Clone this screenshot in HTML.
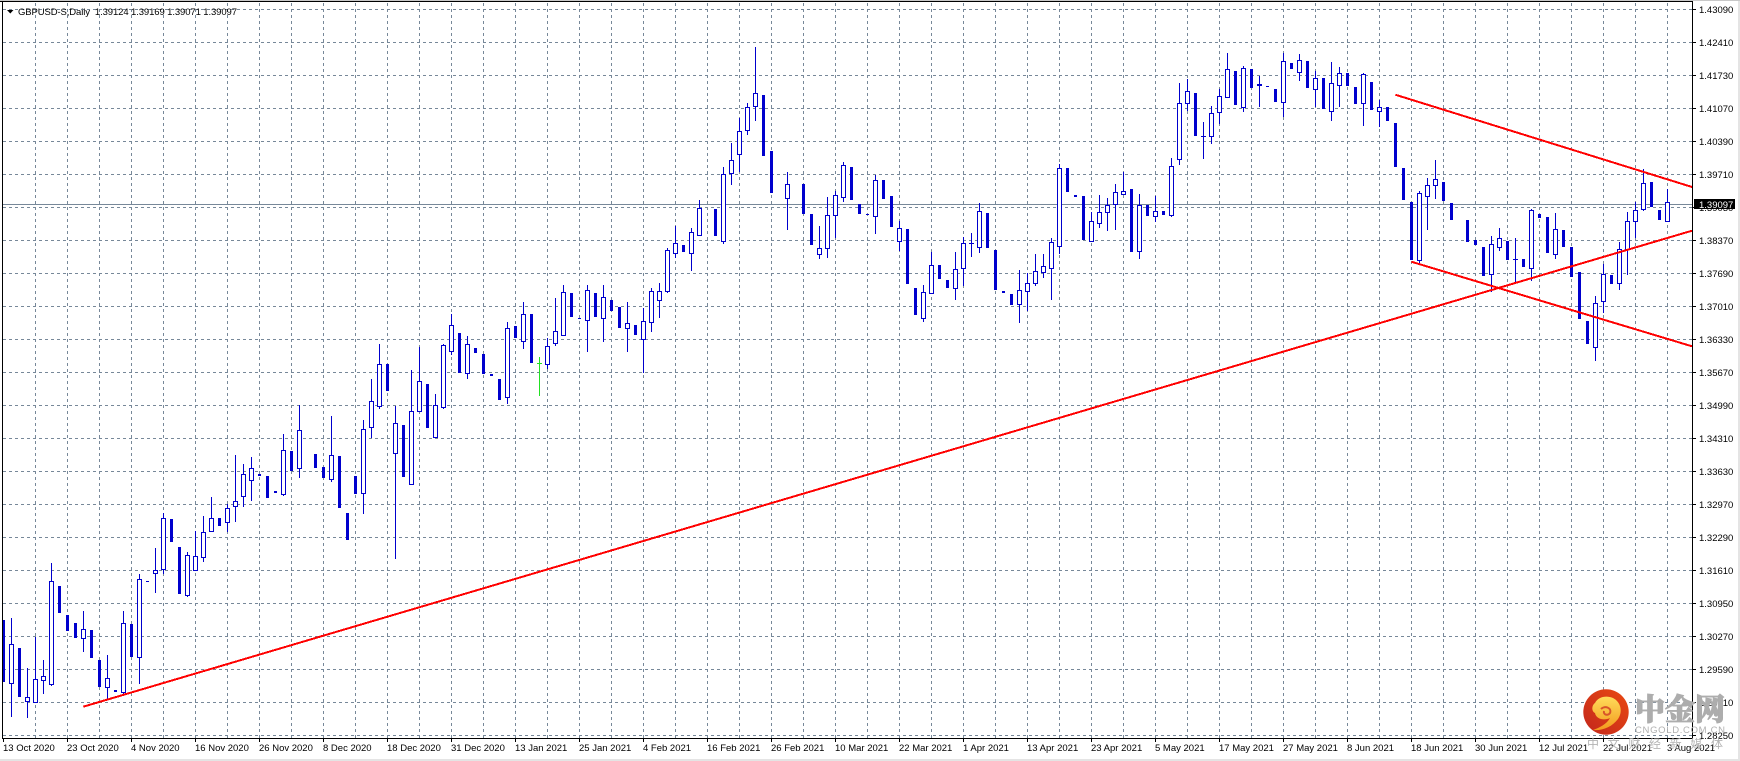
<!DOCTYPE html>
<html><head><meta charset="utf-8"><title>GBPUSD-S,Daily</title>
<style>
html,body{margin:0;padding:0;background:#fff;width:1740px;height:761px;overflow:hidden}
svg{display:block}
text{font-family:"Liberation Sans",sans-serif;font-size:9.5px;fill:#000}
</style></head><body>
<svg width="1740" height="761" viewBox="0 0 1740 761" xmlns="http://www.w3.org/2000/svg">
<rect width="1740" height="761" fill="#fff"/>
<g shape-rendering="crispEdges">
<path fill="none" stroke="#778899" stroke-width="1" stroke-dasharray="3 3" d="M3 9.5H1692M3 42.5H1692M3 75.5H1692M3 108.5H1692M3 141.5H1692M3 174.5H1692M3 207.5H1692M3 240.5H1692M3 273.5H1692M3 306.5H1692M3 339.5H1692M3 372.5H1692M3 405.5H1692M3 438.5H1692M3 471.5H1692M3 504.5H1692M3 537.5H1692M3 570.5H1692M3 603.5H1692M3 636.5H1692M3 669.5H1692M3 702.5H1692M3 735.5H1692
M35.5 3V738M67.5 3V738M99.5 3V738M131.5 3V738M163.5 3V738M195.5 3V738M227.5 3V738M259.5 3V738M291.5 3V738M323.5 3V738M355.5 3V738M387.5 3V738M419.5 3V738M451.5 3V738M483.5 3V738M515.5 3V738M547.5 3V738M579.5 3V738M611.5 3V738M643.5 3V738M675.5 3V738M707.5 3V738M739.5 3V738M771.5 3V738M803.5 3V738M835.5 3V738M867.5 3V738M899.5 3V738M931.5 3V738M963.5 3V738M995.5 3V738M1027.5 3V738M1059.5 3V738M1091.5 3V738M1123.5 3V738M1155.5 3V738M1187.5 3V738M1219.5 3V738M1251.5 3V738M1283.5 3V738M1315.5 3V738M1347.5 3V738M1379.5 3V738M1411.5 3V738M1443.5 3V738M1475.5 3V738M1507.5 3V738M1539.5 3V738M1571.5 3V738M1603.5 3V738M1635.5 3V738M1667.5 3V738"/>
<path stroke="#778899" d="M3 204.5H1692"/>
<!-- wicks -->
<path fill="none" stroke="#0000cd" d="M11.5 618V717M27.5 668V718M35.5 637V702M43.5 660V694M51.5 563V686M83.5 611V652M107.5 655V700M123.5 611V695M139.5 574V684M155.5 548V593M163.5 513V574M187.5 552V597M195.5 531V570M203.5 516V562M211.5 497V531M227.5 504V532M235.5 455V522M243.5 464V507M251.5 457V501M283.5 434V496M299.5 405V478M331.5 416V482M363.5 420V514M371.5 379V438M379.5 344V409M395.5 406V559M411.5 370V484M419.5 347V411M435.5 394V437M443.5 344V409M451.5 314V355M467.5 336V379M507.5 322V404M523.5 302V349M547.5 338V369M555.5 298V346M563.5 285V335M587.5 285V352M603.5 285V342M627.5 302V352M643.5 308V373M651.5 288V332M659.5 283V318M667.5 248V293M675.5 226V258M691.5 228V271M699.5 200V235M723.5 167V244M731.5 143V185M739.5 118V172M747.5 103V135M755.5 47V121M787.5 172V230M819.5 226V259M827.5 197V258M835.5 191V238M843.5 162V202M875.5 175V234M899.5 221V251M923.5 285V322M931.5 252V294M955.5 252V300M963.5 237V286M971.5 233V257M979.5 203V253M1019.5 270V323M1027.5 273V311M1035.5 254V286M1043.5 254V278M1051.5 238V300M1059.5 164V254M1091.5 212V242M1099.5 195V228M1107.5 198V231M1115.5 184V230M1123.5 172V194M1139.5 194V259M1155.5 196V222M1171.5 158V217M1179.5 83V165M1187.5 79V111M1203.5 122V159M1211.5 106V144M1219.5 89V124M1227.5 53V97M1243.5 66V112M1259.5 76V107M1283.5 53V117M1299.5 54V81M1315.5 71V107M1331.5 62V121M1339.5 67V107M1363.5 73V126M1379.5 100V127M1419.5 191V265M1427.5 178V230M1435.5 160V199M1491.5 236V292M1499.5 228V251M1515.5 238V283M1531.5 209V281M1555.5 213V259M1595.5 296V361M1603.5 264V313M1619.5 242V290M1627.5 212V275M1635.5 202V238M1643.5 169V211M1667.5 189V221
M969 243.5h5M1201 136.5h5M1513 259.5h5"/>
<!-- hollow bodies -->
<path fill="#fff" stroke="#0000cd" d="M9.5 644.5h4v39h-4zM25.5 697.5h4v4h-4zM33.5 679.5h4v23h-4zM41.5 676.5h4v4h-4zM49.5 581.5h4v103h-4zM81.5 629.5h4v9h-4zM105.5 678.5h4v9h-4zM121.5 623.5h4v69h-4zM137.5 579.5h4v78h-4zM153.5 570.5h4v3h-4zM161.5 518.5h4v51h-4zM185.5 555.5h4v40h-4zM193.5 556.5h4v14h-4zM201.5 532.5h4v25h-4zM209.5 518.5h4v13h-4zM225.5 508.5h4v14h-4zM233.5 501.5h4v5h-4zM241.5 474.5h4v22h-4zM249.5 468.5h4v12h-4zM281.5 450.5h4v44h-4zM297.5 430.5h4v38h-4zM329.5 455.5h4v24h-4zM361.5 429.5h4v64h-4zM369.5 401.5h4v26h-4zM377.5 364.5h4v42h-4zM393.5 423.5h4v30h-4zM409.5 411.5h4v73h-4zM417.5 381.5h4v30h-4zM433.5 405.5h4v32h-4zM441.5 345.5h4v62h-4zM449.5 325.5h4v26h-4zM465.5 344.5h4v29h-4zM505.5 328.5h4v69h-4zM521.5 314.5h4v27h-4zM545.5 346.5h4v18h-4zM553.5 331.5h4v12h-4zM561.5 292.5h4v43h-4zM585.5 290.5h4v30h-4zM601.5 297.5h4v21h-4zM625.5 323.5h4v5h-4zM641.5 321.5h4v18h-4zM649.5 291.5h4v31h-4zM657.5 291.5h4v9h-4zM665.5 250.5h4v41h-4zM673.5 243.5h4v10h-4zM689.5 232.5h4v21h-4zM697.5 208.5h4v27h-4zM721.5 174.5h4v67h-4zM729.5 160.5h4v13h-4zM737.5 131.5h4v23h-4zM745.5 107.5h4v23h-4zM753.5 93.5h4v13h-4zM785.5 184.5h4v14h-4zM817.5 248.5h4v6h-4zM825.5 215.5h4v33h-4zM833.5 195.5h4v20h-4zM841.5 165.5h4v32h-4zM873.5 180.5h4v36h-4zM897.5 228.5h4v13h-4zM921.5 292.5h4v26h-4zM929.5 265.5h4v28h-4zM953.5 269.5h4v19h-4zM961.5 243.5h4v25h-4zM977.5 211.5h4v36h-4zM1017.5 290.5h4v14h-4zM1025.5 283.5h4v8h-4zM1033.5 271.5h4v12h-4zM1041.5 266.5h4v6h-4zM1049.5 242.5h4v26h-4zM1057.5 168.5h4v78h-4zM1089.5 221.5h4v20h-4zM1097.5 212.5h4v11h-4zM1105.5 205.5h4v7h-4zM1113.5 192.5h4v12h-4zM1121.5 191.5h4v3h-4zM1137.5 205.5h4v46h-4zM1153.5 211.5h4v5h-4zM1169.5 166.5h4v49h-4zM1177.5 103.5h4v56h-4zM1185.5 91.5h4v12h-4zM1209.5 113.5h4v23h-4zM1217.5 96.5h4v16h-4zM1225.5 69.5h4v28h-4zM1241.5 68.5h4v39h-4zM1281.5 61.5h4v41h-4zM1297.5 60.5h4v12h-4zM1313.5 78.5h4v11h-4zM1329.5 83.5h4v28h-4zM1337.5 73.5h4v12h-4zM1361.5 74.5h4v29h-4zM1377.5 107.5h4v4h-4zM1417.5 193.5h4v67h-4zM1425.5 185.5h4v11h-4zM1433.5 179.5h4v6h-4zM1489.5 244.5h4v30h-4zM1497.5 238.5h4v9h-4zM1529.5 210.5h4v58h-4zM1553.5 229.5h4v25h-4zM1593.5 303.5h4v44h-4zM1601.5 274.5h4v27h-4zM1617.5 249.5h4v34h-4zM1625.5 221.5h4v28h-4zM1633.5 210.5h4v11h-4zM1641.5 183.5h4v26h-4zM1665.5 202.5h4v19h-4z"/>
<!-- solid bodies -->
<path fill="#0000cd" d="M3 620h2v62h-2zM18 648h3v49h-3zM58 586h3v27h-3zM66 615h3v16h-3zM74 623h3v15h-3zM90 630h3v28h-3zM98 660h3v27h-3zM114 690h3v2h-3zM130 624h3v33h-3zM146 581h3v1h-3zM170 519h3v23h-3zM178 547h3v47h-3zM218 518h3v8h-3zM258 474h3v2h-3zM266 476h3v22h-3zM274 491h3v2h-3zM290 451h3v20h-3zM314 454h3v14h-3zM322 467h3v11h-3zM338 456h3v52h-3zM346 513h3v27h-3zM354 476h3v18h-3zM386 364h3v27h-3zM402 425h3v52h-3zM426 384h3v44h-3zM458 333h3v40h-3zM474 348h3v5h-3zM482 354h3v20h-3zM490 374h3v2h-3zM498 379h3v21h-3zM514 326h3v12h-3zM530 314h3v49h-3zM570 293h3v24h-3zM578 318h3v1h-3zM594 293h3v24h-3zM610 300h3v11h-3zM618 307h3v21h-3zM634 325h3v10h-3zM682 245h3v7h-3zM714 209h3v27h-3zM762 95h3v61h-3zM770 151h3v42h-3zM802 184h3v30h-3zM810 214h3v31h-3zM850 167h3v33h-3zM858 204h3v10h-3zM866 214h3v1h-3zM882 180h3v19h-3zM890 196h3v31h-3zM906 229h3v55h-3zM914 288h3v27h-3zM938 265h3v14h-3zM946 280h3v8h-3zM986 213h3v35h-3zM994 250h3v40h-3zM1002 291h3v2h-3zM1010 294h3v11h-3zM1066 168h3v24h-3zM1074 195h3v2h-3zM1082 196h3v44h-3zM1130 189h3v63h-3zM1146 205h3v11h-3zM1162 211h3v4h-3zM1194 93h3v43h-3zM1234 71h3v34h-3zM1250 69h3v19h-3zM1257 84h5v2h-5zM1266 86h3v1h-3zM1274 89h3v13h-3zM1290 63h3v6h-3zM1306 61h3v27h-3zM1322 78h3v31h-3zM1346 73h3v13h-3zM1354 87h3v17h-3zM1370 82h3v28h-3zM1386 107h3v14h-3zM1394 123h3v44h-3zM1402 168h3v32h-3zM1410 202h3v58h-3zM1442 182h3v19h-3zM1450 203h3v17h-3zM1466 220h3v22h-3zM1474 240h3v5h-3zM1482 247h3v29h-3zM1506 241h3v19h-3zM1522 259h3v8h-3zM1538 214h3v4h-3zM1546 217h3v36h-3zM1562 230h3v17h-3zM1570 247h3v30h-3zM1578 272h3v47h-3zM1586 321h3v23h-3zM1610 275h3v9h-3zM1650 182h3v25h-3zM1658 210h3v10h-3z"/>
<!-- green candle -->
<path fill="none" stroke="#22e022" d="M539.5 357V396M537 363.5h5"/>
<!-- red trendlines -->
<path fill="none" stroke="#f00" stroke-width="2" d="M83.3 706.7L1692 230.7M1395.3 94.7L1692 187M1411.3 261.7L1692 346.3"/>
<!-- axes -->
<path fill="none" stroke="#000" d="M0 1.5H1692M2.5 1V738M1692.5 1V739M2 738.5H1693"/>
<path fill="none" stroke="#000" d="M1693 9.5h3M1693 42.5h3M1693 75.5h3M1693 108.5h3M1693 141.5h3M1693 174.5h3M1693 207.5h3M1693 240.5h3M1693 273.5h3M1693 306.5h3M1693 339.5h3M1693 372.5h3M1693 405.5h3M1693 438.5h3M1693 471.5h3M1693 504.5h3M1693 537.5h3M1693 570.5h3M1693 603.5h3M1693 636.5h3M1693 669.5h3M1693 702.5h3M1693 735.5h3
M3.5 739v3M67.5 739v3M131.5 739v3M195.5 739v3M259.5 739v3M323.5 739v3M387.5 739v3M451.5 739v3M515.5 739v3M579.5 739v3M643.5 739v3M707.5 739v3M771.5 739v3M835.5 739v3M899.5 739v3M963.5 739v3M1027.5 739v3M1091.5 739v3M1155.5 739v3M1219.5 739v3M1283.5 739v3M1347.5 739v3M1411.5 739v3M1475.5 739v3M1539.5 739v3M1603.5 739v3M1667.5 739v3"/>
<rect x="0" y="759" width="1740" height="2" fill="#e4e4e4"/>
<rect x="1738" y="0" width="2" height="761" fill="#e4e4e4"/>
<rect x="0" y="0" width="1740" height="1" fill="#c8c8c8"/>
</g>
<!-- title -->
<path d="M7 10h6.5l-3.2 3.5z" fill="#000"/>
<text x="18" y="15" xml:space="preserve" textLength="219">GBPUSD-S,Daily  1.39124 1.39169 1.39071 1.39097</text>
<!-- price labels -->
<g>
<text x="1699" y="13">1.43090</text><text x="1699" y="46">1.42410</text><text x="1699" y="79">1.41730</text><text x="1699" y="112">1.41070</text><text x="1699" y="145">1.40390</text><text x="1699" y="178">1.39710</text><text x="1699" y="211">1.39030</text><text x="1699" y="244">1.38370</text><text x="1699" y="277">1.37690</text><text x="1699" y="310">1.37010</text><text x="1699" y="343">1.36330</text><text x="1699" y="376">1.35670</text><text x="1699" y="409">1.34990</text><text x="1699" y="442">1.34310</text><text x="1699" y="475">1.33630</text><text x="1699" y="508">1.32970</text><text x="1699" y="541">1.32290</text><text x="1699" y="574">1.31610</text><text x="1699" y="607">1.30950</text><text x="1699" y="640">1.30270</text><text x="1699" y="673">1.29590</text><text x="1699" y="706">1.28910</text><text x="1699" y="739">1.28250</text>
</g>
<rect x="1694" y="199" width="41" height="10" fill="#000" shape-rendering="crispEdges"/>
<text x="1699" y="208" style="fill:#fff">1.39097</text>
<!-- date labels -->
<g>
<text x="3" y="751">13 Oct 2020</text><text x="67" y="751">23 Oct 2020</text><text x="131" y="751">4 Nov 2020</text><text x="195" y="751">16 Nov 2020</text><text x="259" y="751">26 Nov 2020</text><text x="323" y="751">8 Dec 2020</text><text x="387" y="751">18 Dec 2020</text><text x="451" y="751">31 Dec 2020</text><text x="515" y="751">13 Jan 2021</text><text x="579" y="751">25 Jan 2021</text><text x="643" y="751">4 Feb 2021</text><text x="707" y="751">16 Feb 2021</text><text x="771" y="751">26 Feb 2021</text><text x="835" y="751">10 Mar 2021</text><text x="899" y="751">22 Mar 2021</text><text x="963" y="751">1 Apr 2021</text><text x="1027" y="751">13 Apr 2021</text><text x="1091" y="751">23 Apr 2021</text><text x="1155" y="751">5 May 2021</text><text x="1219" y="751">17 May 2021</text><text x="1283" y="751">27 May 2021</text><text x="1347" y="751">8 Jun 2021</text><text x="1411" y="751">18 Jun 2021</text><text x="1475" y="751">30 Jun 2021</text><text x="1539" y="751">12 Jul 2021</text><text x="1603" y="751">22 Jul 2021</text><text x="1667" y="751">3 Aug 2021</text>
</g>
<!-- logo -->
<defs>
<linearGradient id="lg1" x1="1" y1="0" x2="0" y2="1"><stop offset="0" stop-color="#ea4a12"/><stop offset="1" stop-color="#c2261c"/></linearGradient>
<linearGradient id="lg2" x1="0" y1="0" x2="0" y2="1"><stop offset="0" stop-color="#ffdc5a"/><stop offset="1" stop-color="#f39a1e"/></linearGradient>
</defs>
<circle cx="1606" cy="712" r="22.7" fill="url(#lg1)"/>
<path d="M1595 703C1598 697 1606 695 1613 698C1621 702 1623 712 1618 719C1612 727 1602 731 1593 730C1599 728 1607 724 1610 718C1604 721 1596 719 1595 713C1591 711 1592 705 1595 703Z" fill="url(#lg2)"/>
<path d="M1601 709C1605 705 1612 708 1610 713C1608 716 1603 715 1604 711" fill="none" stroke="#d8552a" stroke-width="2"/>
<text x="1635" y="720" style="font-family:'Liberation Sans','Noto Serif CJK SC','Noto Sans CJK SC',serif;font-weight:900;font-size:30px;fill:#adadad;stroke:#adadad;stroke-width:1px">中金网</text>
<text x="1635" y="733" textLength="90" style="font-size:9.5px;fill:#b0b0b0">CNGOLD.COM.CN</text>
<text x="1587" y="748" textLength="136" style="font-family:'Liberation Sans','Noto Sans CJK SC',sans-serif;font-size:12px;fill:#b4b4b4">中文财经新媒体</text>
</svg>
</body></html>
